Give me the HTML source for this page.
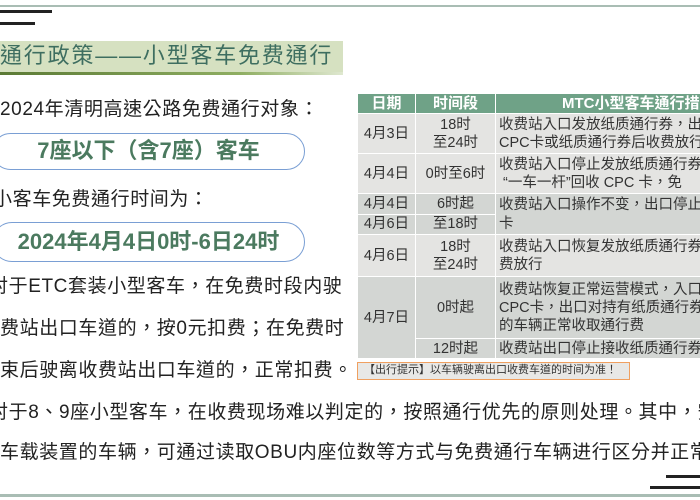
<!DOCTYPE html>
<html><head><meta charset="utf-8"><style>
*{margin:0;padding:0;box-sizing:border-box}
body{width:700px;height:500px;position:relative;overflow:hidden;background:#fff;font-family:"Liberation Sans","Noto Sans CJK TC",sans-serif;color:#222}
.a{position:absolute;white-space:nowrap}
.ln{position:absolute;background:#222}
.t{font-size:19px;line-height:22px;letter-spacing:0.6px}
.pill{position:absolute;border:1.5px solid #7a9fd4;border-radius:20px;background:#fff;color:#4b7a5f;font-weight:bold;font-size:22px;text-align:center}
table{position:absolute;left:357px;top:93px;border-collapse:collapse;font-size:14.5px;line-height:18px;color:#333;table-layout:fixed;width:360px}
td{border:1.5px solid #fff;vertical-align:middle;overflow:hidden;white-space:nowrap}
th{background:#6fa287;color:#fff;font-size:15px;border:1.5px solid #fff;height:20px;font-weight:bold;white-space:nowrap;overflow:hidden}
.c{text-align:center}
.g1 td{background:#e4e4e2}
.g2 td{background:#d3d6d3}
</style></head><body>
<div class="a" style="left:0;top:5px;width:700px;height:2px;background:#a9bdb4"></div>
<div class="ln" style="left:0;top:10px;width:52px;height:3px"></div>
<div class="ln" style="left:0;top:22px;width:35px;height:3px"></div>
<div class="a" style="left:0;top:41px;width:343px;height:31px;background:#d6e1c1"></div>
<div class="a" style="left:0;top:72px;width:343px;height:3px;background:linear-gradient(90deg,#5b7a35,#8fae62 70%,#dfe8d0)"></div>
<div class="a" style="left:0;top:42px;font-size:22px;line-height:28px;color:#3e6e60;letter-spacing:1.8px">通行政策——小型客车免费通行</div>
<div class="a t" style="left:0;top:99px">2024年清明高速公路免费通行对象：</div>
<div class="pill" style="left:-8px;top:133px;width:313px;height:37px;line-height:34px">7座以下（含7座）客车</div>
<div class="a t" style="left:-7px;top:189px">小客车免费通行时间为：</div>
<div class="pill" style="left:-8px;top:222px;width:313px;height:40px;line-height:37px">2024年4月4日0时-6日24时</div>
<div class="a t" style="left:-11px;top:276px">对于ETC套装小型客车，在免费时段内驶</div>
<div class="a t" style="left:0;top:318px">费站出口车道的，按0元扣费；在免费时</div>
<div class="a t" style="left:0;top:360px">束后驶离收费站出口车道的，正常扣费。</div>
<div class="a t" style="left:-11px;top:402px">对于8、9座小型客车，在收费现场难以判定的，按照通行优先的原则处理。其中，安</div>
<div class="a t" style="left:0;top:442px">车载装置的车辆，可通过读取OBU内座位数等方式与免费通行车辆进行区分并正常</div>
<table>
<colgroup><col style="width:58px"><col style="width:80px"><col style="width:222px"></colgroup>
<tr><th>日期</th><th>时间段</th><th style="text-align:left;padding-left:66px">MTC小型客车通行措施</th></tr>
<tr class="g1"><td class="c" style="height:40px">4月3日</td><td class="c">18时<br>至24时</td><td style="padding-left:3px">收费站入口发放纸质通行券，出<br>CPC卡或纸质通行券后收费放行</td></tr>
<tr class="g1"><td class="c" style="height:40px">4月4日</td><td class="c">0时至6时</td><td style="padding-left:3px">收费站入口停止发放纸质通行券<br>&nbsp;“一车一杆”回收 CPC 卡，免</td></tr>
<tr class="g2"><td class="c" style="height:20px">4月4日</td><td class="c">6时起</td><td rowspan="2" style="padding-left:3px;vertical-align:top;padding-top:2px;line-height:19px">收费站入口操作不变，出口停止<br>卡</td></tr>
<tr class="g2"><td class="c" style="height:20px">4月6日</td><td class="c">至18时</td></tr>
<tr class="g1"><td class="c" style="height:42px">4月6日</td><td class="c">18时<br>至24时</td><td style="padding-left:3px">收费站入口恢复发放纸质通行券<br>费放行</td></tr>
<tr class="g2"><td class="c" rowspan="2">4月7日</td><td class="c" style="height:62px">0时起</td><td style="padding-left:3px">收费站恢复正常运营模式，入口<br>CPC卡，出口对持有纸质通行券<br>的车辆正常收取通行费</td></tr>
<tr class="g2"><td class="c" style="height:20px">12时起</td><td style="padding-left:3px">收费站出口停止接收纸质通行券</td></tr>
</table>
<div class="a" style="left:357px;top:362px;width:273px;height:18px;border:1.5px solid #f0a060;background:#e8e8e6;font-size:11px;line-height:15px;padding-left:6px;color:#333">【出行提示】以车辆驶离出口收费车道的时间为准！</div>
<div class="ln" style="left:666px;top:475px;width:34px;height:3px"></div>
<div class="ln" style="left:650px;top:486px;width:50px;height:3px"></div>
<div class="a" style="left:0;top:494px;width:700px;height:3px;background:#a9bdb4"></div>
</body></html>
